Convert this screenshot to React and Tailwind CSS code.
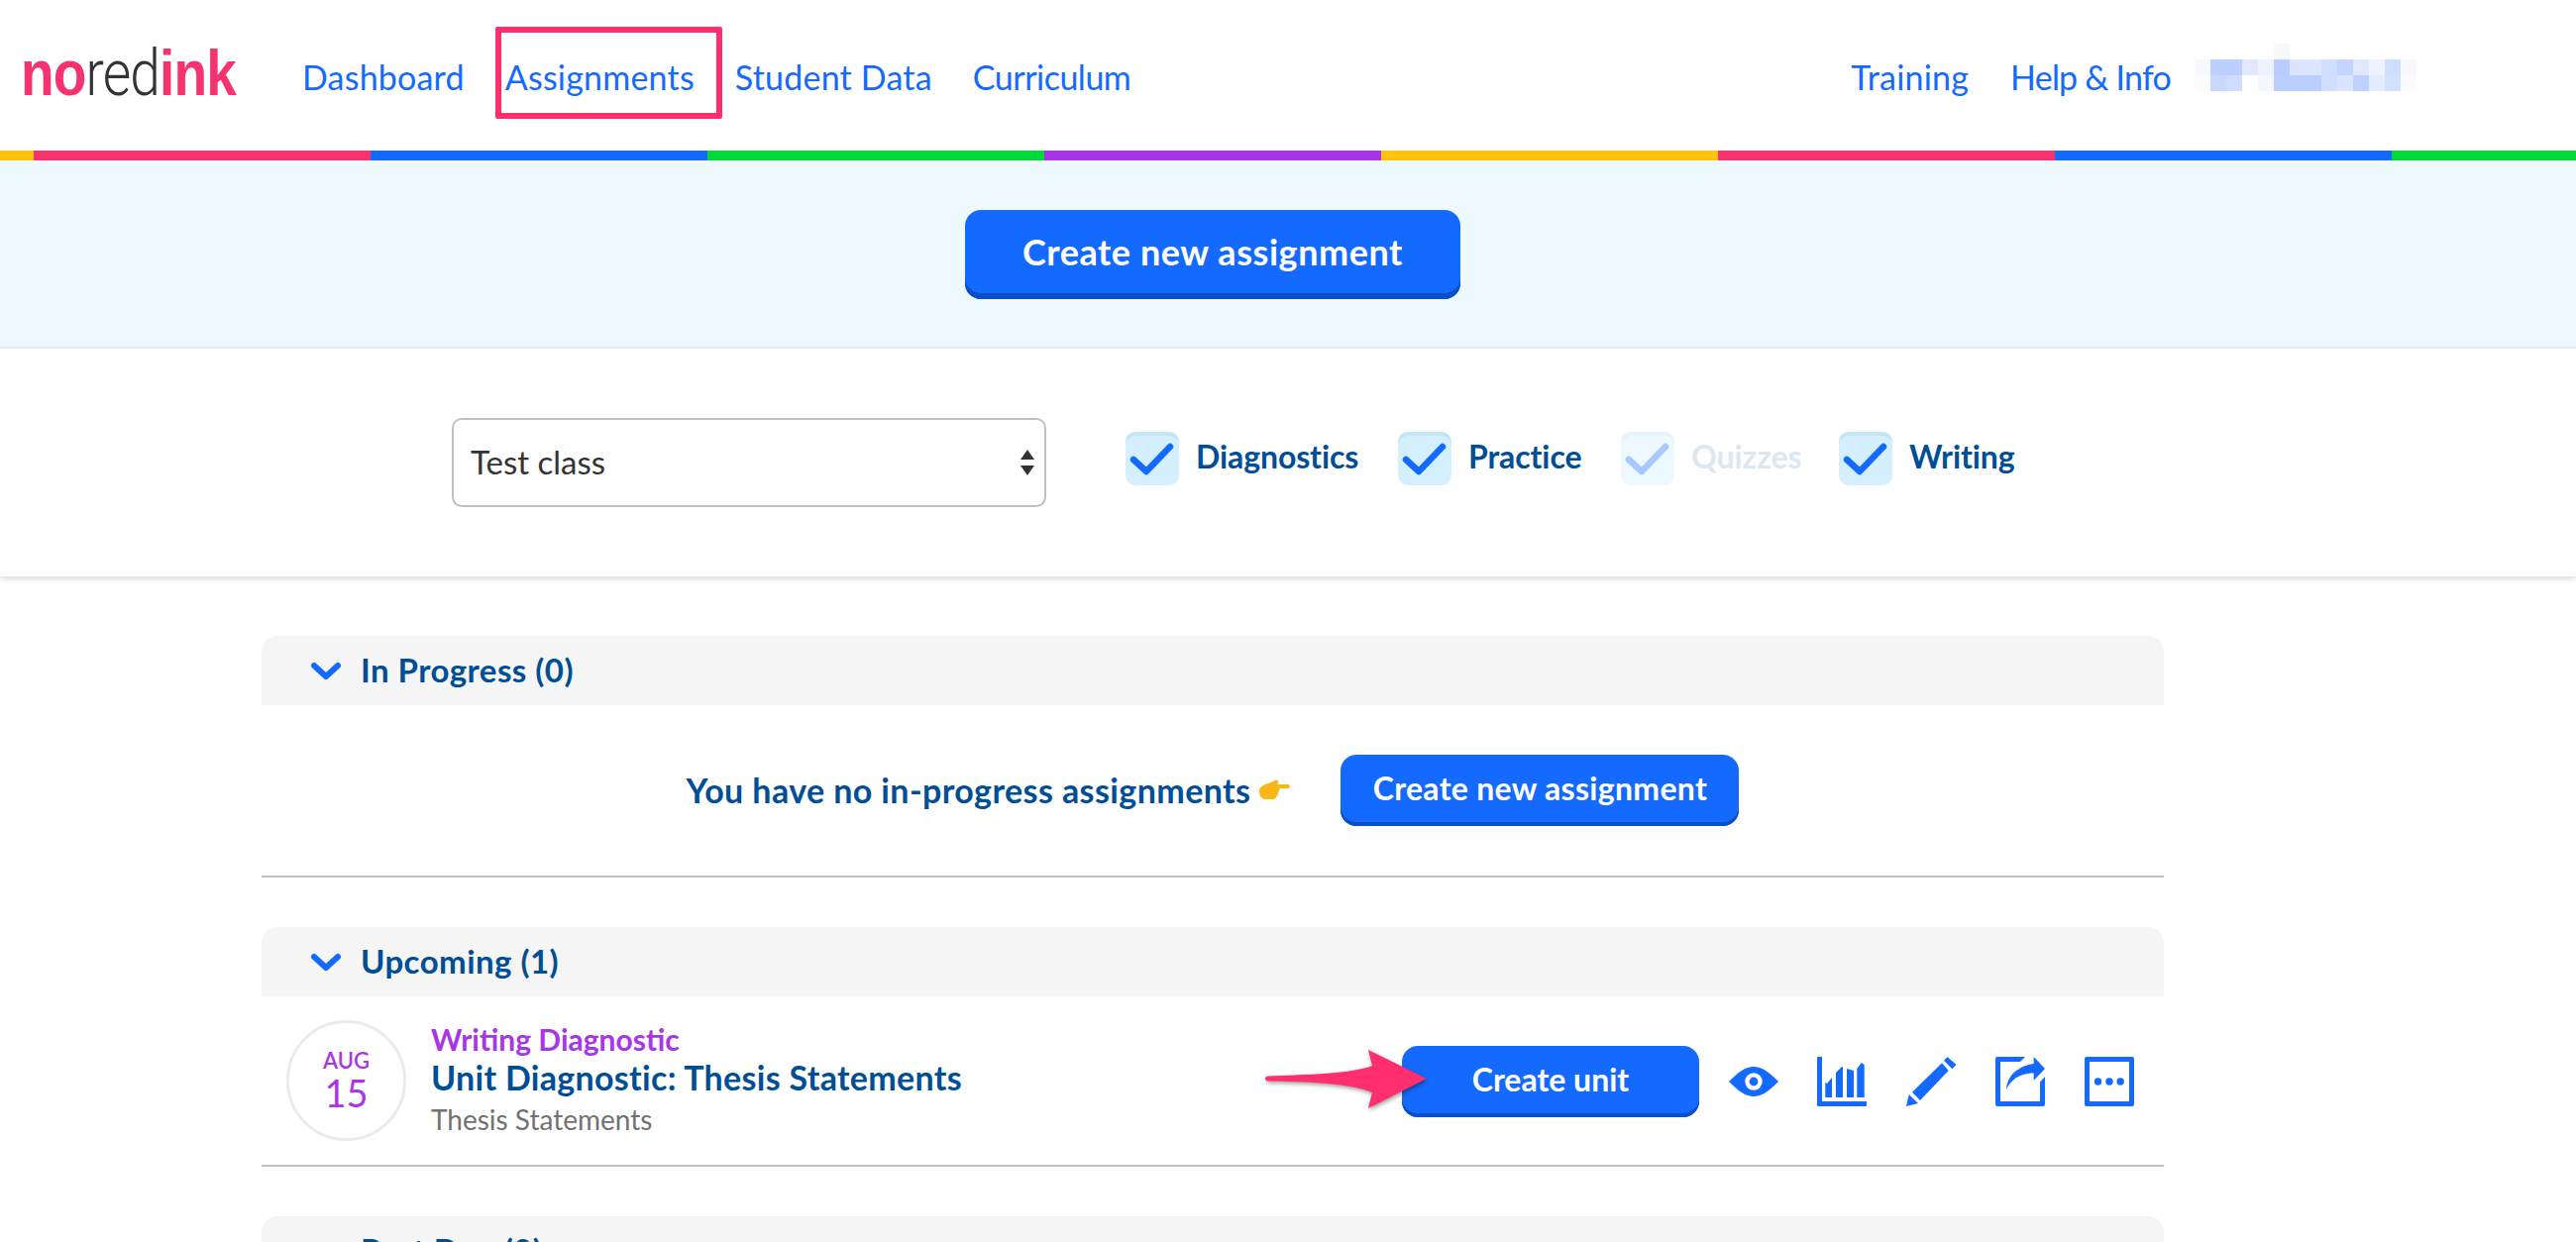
const stripes = [
    'w-[34px] bg-[#ffc30a]',
    'w-[340px] bg-[#f5336e]',
    'w-[340px] bg-[#146aff]',
    'w-[340px] bg-[#00d93c]',
    'w-[340px] bg-[#a836e6]',
    'w-[340px] bg-[#ffc30a]',
    'w-[340px] bg-[#f5336e]',
    'w-[340px] bg-[#146aff]',
    'flex-1 bg-[#00d93c]',
];

// the pixelated, blurred-out user name in the nav
const mosaic = [
    'bg-white', 'bg-white', 'bg-white', 'bg-white', 'bg-white', 'bg-[#f7f9ff]', 'bg-white', 'bg-white', 'bg-white', 'bg-white', 'bg-white', 'bg-white', 'bg-white', 'bg-white',
    'bg-[#f7f9ff]', 'bg-[#bccfff]', 'bg-[#bccfff]', 'bg-[#dfe8ff]', 'bg-[#eef3ff]', 'bg-[#b9ccff]', 'bg-[#dbe5ff]', 'bg-[#dbe5ff]', 'bg-[#d0deff]', 'bg-[#c4d5ff]', 'bg-[#dfe8ff]', 'bg-[#eef3ff]', 'bg-[#cfdeff]', 'bg-[#f7f9ff]',
    'bg-[#fcfcff]', 'bg-[#c8d8ff]', 'bg-[#cfdcff]', 'bg-white', 'bg-[#f4f7ff]', 'bg-[#bbcfff]', 'bg-[#bbcfff]', 'bg-[#bbcfff]', 'bg-[#d0deff]', 'bg-[#dbe5ff]', 'bg-[#bfd2ff]', 'bg-[#e4ecff]', 'bg-[#d3e1ff]', 'bg-[#f9fbff]',
];

function Check({ className }) {
    return (
        <svg viewBox="0 0 54 54" className={className} fill="none" stroke="currentColor" strokeWidth="6.5" strokeLinecap="round" strokeLinejoin="round">
            <path d="M8 28 L21 40 L45 15" />
        </svg>
    );
}

function Filter({ label, faded, boxClass }) {
    return (
        <div className={`flex items-center gap-[17px] ${boxClass}`}>
            <div className={`w-[54px] h-[54px] rounded-[10px] flex items-center justify-center ${faded ? 'bg-[#eef9ff] shadow-[inset_0_4px_0_#e6f3fa]' : 'bg-[#d4f0ff] shadow-[inset_0_4px_0_#c4e5f3]'}`}>
                <Check className={`w-[54px] h-[54px] ${faded ? 'text-[#a8c9ff]' : 'text-[#146aff]'}`} />
            </div>
            <span className={`text-[32px] leading-[40px] -mt-[4px] font-bold tracking-[-0.1px] ${faded ? 'text-[#dde7f2]' : 'text-[#004e95]'}`}>{label}</span>
        </div>
    );
}

function SectionHeader({ title }) {
    return (
        <div className="h-[70px] bg-[#f5f5f5] rounded-t-[16px] flex items-center pl-[49px] gap-[19px]">
            <svg viewBox="0 0 32 19" className="w-[32px] h-[19px] text-[#146aff]" fill="none" stroke="currentColor" strokeWidth="6" strokeLinecap="round" strokeLinejoin="round">
                <path d="M4 4 L16 15 L28 4" />
            </svg>
            <span className="text-[33px] tracking-[0.45px] font-bold text-[#004e95]">{title}</span>
        </div>
    );
}

function EyeIcon() {
    return (
        <svg viewBox="0 0 50 30" className="w-[50px] h-[30px] text-[#146aff]">
            <path fill="currentColor" d="M0 15 C10 5 17 0 25 0 C33 0 40 5 50 15 C40 25 33 30 25 30 C17 30 10 25 0 15 Z" />
            <circle cx="25" cy="15" r="8.7" fill="#fff" />
            <circle cx="25" cy="15" r="4.4" fill="currentColor" />
        </svg>
    );
}

function ChartIcon() {
    return (
        <svg viewBox="0 0 50 50" className="w-[50px] h-[50px] text-[#146aff]" fill="currentColor">
            <path d="M1 0 H5 V45 H50 V49 a1 1 0 0 1 -1 1 H1 a1 1 0 0 1 -1 -1 V1 a1 1 0 0 1 1 -1 Z" />
            <path d="M8.3 26 L10 27 L15 21 V41 H8.3 Z" />
            <path d="M19 16 L25 10 L26 10 V41 H19 Z" />
            <path d="M30 12 L37 14 V41 H30 Z" />
            <path d="M40.3 12 L45 6 L47.7 8 V41 H40.3 Z" />
        </svg>
    );
}

function PencilIcon() {
    return (
        <svg viewBox="0 0 50 50" className="w-[50px] h-[50px] text-[#146aff]" fill="currentColor">
            <path d="M0 50 L2.7 38 L12 47 Z" />
            <path d="M6 35.7 L36 6.3 L42.7 14 L14 44 Z" />
            <path d="M38 3.7 L40.5 1 a1.4 1.4 0 0 1 2 0 L49.5 7 a1.4 1.4 0 0 1 0 2 L46.3 12.3 Z" />
        </svg>
    );
}

function ShareIcon() {
    return (
        <svg viewBox="0 0 50 50" className="w-[50px] h-[50px] text-[#146aff]" fill="currentColor">
            <path d="M2 0 H30 L25 5 H5 V45 H45 V25.5 L50 20 V48 a2 2 0 0 1 -2 2 H2 a2 2 0 0 1 -2 -2 V2 a2 2 0 0 1 2 -2 Z" />
            <path d="M11 33 C12 18 24 9 38.7 7 V0 L50 12 L38.7 24 V16.5 C26 16.5 16 22 11 33 Z" />
        </svg>
    );
}

function DotsIcon() {
    return (
        <svg viewBox="0 0 50 50" className="w-[50px] h-[50px] text-[#146aff]" fill="currentColor">
            <path fillRule="evenodd" d="M2 0 H48 a2 2 0 0 1 2 2 V48 a2 2 0 0 1 -2 2 H2 a2 2 0 0 1 -2 -2 V2 a2 2 0 0 1 2 -2 Z M5 5 V45 H45 V5 Z" />
            <circle cx="13.5" cy="25" r="3.7" />
            <circle cx="25" cy="25" r="3.7" />
            <circle cx="36.2" cy="25" r="3.7" />
        </svg>
    );
}

export default function App() {
    return (
        <div className="relative h-screen overflow-hidden bg-white font-[Lato,sans-serif]">
            {/* Top nav */}
            <nav className="h-[152px] flex items-center justify-between pr-[161px]">
                <div className="flex items-center">
                    <div className="w-[305px] pl-[21px] pb-[4px] h-[80px] flex items-center">
                        <div className="origin-left scale-x-[0.86] whitespace-nowrap text-[64px] leading-none tracking-[-1px] font-['Liberation_Sans',sans-serif]">
                            <span className="font-bold text-[#f5336e]">no</span>
                            <span className="font-['Roboto',sans-serif] font-light text-[#333333]">red</span>
                            <span className="font-bold text-[#f5336e]">ink</span>
                        </div>
                    </div>
                    <div className="flex items-center gap-[41px] text-[34px] tracking-[0.2px] text-[#146aff] pt-[3px]">
                        <a>Dashboard</a>
                        <a>Assignments</a>
                        <a>Student Data</a>
                        <a className="tracking-[-0.5px]">Curriculum</a>
                    </div>
                </div>
                <div className="flex items-center gap-[42px] text-[34px] tracking-[0.2px] text-[#146aff] pt-[3px]">
                    <a>Training</a>
                    <div className="flex items-center gap-[24px]">
                        <a className="tracking-[-0.8px]">Help &amp; Info</a>
                        <div className="grid grid-cols-[repeat(14,16px)] grid-rows-[repeat(3,16px)] -mt-[20px]">
                            {mosaic.map((c, i) => <div key={i} className={c} />)}
                        </div>
                    </div>
                </div>
            </nav>

            {/* Highlight box drawn over the Assignments link */}
            <div className="absolute left-[500px] top-[27px] w-[229px] h-[93px] border-[6px] border-[#ff2e6e] rounded-[2px]" />

            <div className="flex h-[10px]">
                {stripes.map((c, i) => <div key={i} className={c} />)}
            </div>

            {/* Hero */}
            <div className="h-[190px] bg-[#eef9ff] shadow-[inset_0_-2px_2px_#e9f2f7] flex justify-center items-center w-full pr-[152px]">
                <button className="w-[500px] h-[90px] rounded-[16px] bg-[#146aff] shadow-[inset_0_-6px_0_#0a4fc4] pb-[6px] text-[36px] tracking-[0.55px] font-bold text-white">
                    Create new assignment
                </button>
            </div>

            {/* Filters */}
            <div className="relative h-[230px] bg-white shadow-[0_2px_6px_rgba(0,0,0,0.16)] flex items-start pl-[456px] pt-[70px]">
                <div className="w-[600px] h-[90px] mr-[80px] border-2 border-[#bfbfbf] rounded-[10px] flex items-center justify-between pl-[17px] pr-[10px]">
                    <span className="text-[33px] leading-[40px] -mt-[2px] text-[#333333]">Test class</span>
                    <svg viewBox="0 0 14 26" className="w-[14px] h-[26px] text-[#333333]" fill="currentColor">
                        <path d="M7 0 L14 10 H0 Z" />
                        <path d="M0 16 H14 L7 26 Z" />
                    </svg>
                </div>
                <div className="flex items-center mt-[14px] h-[54px]">
                    <Filter label="Diagnostics" boxClass="w-[275px]" />
                    <Filter label="Practice" boxClass="w-[225px]" />
                    <Filter label="Quizzes" faded boxClass="w-[220px]" />
                    <Filter label="Writing" />
                </div>
            </div>

            <main className="relative w-[1920px] ml-[264px] pt-[60px]">
                {/* In progress */}
                <SectionHeader title="In Progress (0)" />
                <div className="h-[174px] border-b-2 border-[#bfbfbf] flex justify-center items-center">
                    <div className="flex items-center">
                        <span className="text-[34px] tracking-[0.4px] -mt-[1px] font-bold text-[#004e95]">You have no in-progress assignments</span>
                        <svg viewBox="0 0 31 20" className="w-[31px] h-[20px] ml-[9px] -mt-[2px]">
                            <path fill="#f9b818" d="M0 11 C1 7 5 5 9 4 L17 0.5 C19 0 20 3 18 5 H29 C31.5 5 31.5 9 29 9 H20 C21 11 20 12.5 19 13 C19.5 15 18.5 16 17.5 16.5 C17.5 18.5 16 20 14 20 H6 C2 20 0 16 0 11 Z" />
                        </svg>
                        <button className="w-[402px] h-[72px] ml-[51px] rounded-[16px] bg-[#146aff] shadow-[inset_0_-4px_0_#0a4fc4] pb-[4px] text-[32px] tracking-[0.3px] font-bold text-white">
                            Create new assignment
                        </button>
                    </div>
                </div>

                {/* Upcoming */}
                <div className="mt-[50px]">
                    <SectionHeader title="Upcoming (1)" />
                    <div className="relative h-[172px] border-b-2 border-[#bfbfbf] flex items-center pl-[25px] pr-[30px] pt-[2px]">
                        <div className="w-[121px] h-[122px] -mt-[3px] rounded-full border-[3px] border-[#ebebeb] flex flex-col items-center justify-center text-[#a836e6] leading-none shrink-0">
                            <span className="text-[22px] font-semibold">AUG</span>
                            <span className="text-[38px] mt-[2px]">15</span>
                        </div>
                        <div className="ml-[25px] -mt-[3px] flex flex-col">
                            <span className="text-[30px] leading-[38px] font-bold text-[#a836e6]">Writing Diagnostic</span>
                            <span className="text-[34px] tracking-[0.3px] leading-[40px] font-bold text-[#004e95]">Unit Diagnostic: Thesis Statements</span>
                            <span className="text-[28px] leading-[44px] text-[#727272]">Thesis Statements</span>
                        </div>
                        <div className="ml-auto flex items-center gap-[40px]">
                            <button className="w-[300px] h-[72px] rounded-[16px] bg-[#146aff] shadow-[inset_0_-4px_0_#0a4fc4] pb-[4px] text-[32px] font-bold text-white">
                                Create unit
                            </button>
                            <div className="w-[50px] h-[50px] -ml-[10px] mr-[-1px] flex items-center justify-center"><EyeIcon /></div>
                            <ChartIcon />
                            <PencilIcon />
                            <ShareIcon />
                            <DotsIcon />
                        </div>

                        {/* Arrow annotation pointing at the button */}
                        <svg viewBox="0 0 180 80" className="absolute left-[1006px] top-[44px] w-[180px] h-[80px] drop-shadow-[1px_2px_2px_rgba(0,0,0,0.4)]">
                            <path fill="#ff2e6e" d="M10 36.5 C50 35 95 34 115 26 L111 10 L170 39 L111 69 L115 53 C95 44 50 42 10 41.5 C6 41.5 6 36.5 10 36.5 Z" />
                        </svg>
                    </div>
                </div>

                {/* Past due, cut off by the bottom of the window */}
                <div className="mt-[50px]">
                    <SectionHeader title="Past Due (0)" />
                </div>
            </main>
        </div>
    );
}
